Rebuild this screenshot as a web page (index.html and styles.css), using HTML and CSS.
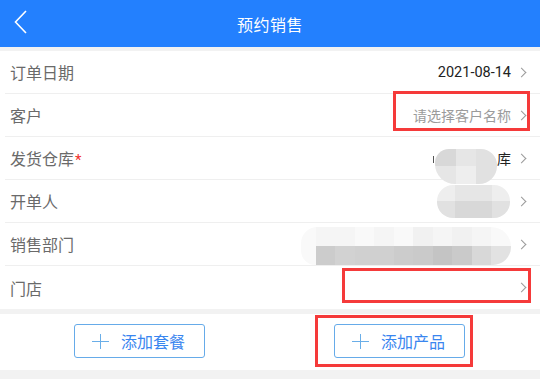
FILE: index.html
```html
<!DOCTYPE html>
<html lang="zh-CN">
<head>
  <meta charset="UTF-8" />
  <title>预约销售</title>
  <meta name="viewport" content="width=device-width, initial-scale=1.0" />
  <link rel="stylesheet" href="styles.css">
</head>
<body>

  <header class="topbar">
    <a class="back" href="#">
      <svg width="14" height="24" viewBox="0 0 14 24"><polyline points="12,1 1.5,12 12,23" fill="none" stroke="#fff" stroke-width="1.6"/></svg>
    </a>
    <h1>预约销售</h1>
  </header>

  <main class="form">
    <div class="row">
      <span class="label">订单日期</span>
      <span class="value date">2021-08-14</span>
      <i class="arrow"></i>
    </div>
    <div class="row">
      <span class="label">客户</span>
      <span class="value placeholder">请选择客户名称</span>
      <i class="arrow"></i>
    </div>
    <div class="row">
      <span class="label">发货仓库<em>*</em></span>
      <span class="tick"></span>
      <div class="blob blob-store">
        <div class="cells"><b class="g4"></b><b class="g2"></b><b class="g3"></b></div>
        <div class="cells"><b class="g2"></b><b class="g1"></b><b class="g3"></b></div>
      </div>
      <span class="value">库</span>
      <i class="arrow"></i>
    </div>
    <div class="row">
      <span class="label">开单人</span>
      <div class="blob blob-user">
        <div class="cells"><b class="g1"></b><b class="g2"></b><b class="g2"></b><b class="g1"></b></div>
        <div class="cells"><b class="g3"></b><b class="g4"></b><b class="g4"></b><b class="g3"></b></div>
      </div>
      <i class="arrow"></i>
    </div>
    <div class="row">
      <span class="label">销售部门</span>
      <div class="blob blob-dept">
        <div class="cells"><b class="w0"></b><b class="w1"></b><b class="w1"></b><b class="w0"></b><b class="w1"></b><b class="w0"></b><b class="w2"></b><b class="w1"></b><b class="w2"></b><b class="w1"></b><b class="w0"></b></div>
        <div class="cells"><b class="w0"></b><b class="d2"></b><b class="d3"></b><b class="d4"></b><b class="d4"></b><b class="d2"></b><b class="d1"></b><b class="d5"></b><b class="d1"></b><b class="d6"></b><b class="d7"></b></div>
      </div>
      <i class="arrow"></i>
    </div>
    <div class="row">
      <span class="label">门店</span>
      <span class="value"></span>
      <i class="arrow"></i>
    </div>
  </main>

  <section class="actions">
    <button class="add-btn"><span class="plus"></span>添加套餐</button>
    <button class="add-btn"><span class="plus"></span>添加产品</button>
  </section>

  <div class="mark mark-customer"></div>
  <div class="mark mark-shop"></div>
  <div class="mark mark-product"></div>

</body>
</html>
```

FILE: styles.css
```css
body {
  margin: 0;
  padding: 0;
  width: 540px;
  height: 379px;
  overflow: hidden;
  position: relative;
  background: #f2f2f2;
  font-family: Roboto, "Noto Sans CJK SC", sans-serif;
}

.topbar {
  height: 47px;
  background-color: #2380fe;
  color: white;
  display: flex;
  align-items: center;
  justify-content: center;
  position: relative;
}

.topbar h1 {
  margin: 0;
  font-size: 16px;
  font-weight: normal;
  letter-spacing: 0.5px;
}

.back {
  position: absolute;
  left: 14px;
  top: 10px;
  display: block;
  line-height: 0;
}

.form {
  margin-top: 4px;
  background: white;
  padding-left: 5px;
}

.row {
  height: 42px;
  display: flex;
  align-items: center;
  border-bottom: 1px solid #efefef;
  padding: 0 14px 0 5px;
}

.row:last-child { border-bottom: none; height: 43px; }

.label {
  flex: 1;
  font-size: 16px;
  color: #6a6a6a;
}

.label em {
  color: #f0302c;
  font-style: normal;
  font-size: 15px;
  margin-left: 1px;
}

.value {
  font-size: 14px;
  color: #222;
}

.date { font-size: 14.5px; }

.placeholder { color: #9b9b9b; }

.arrow {
  width: 6px;
  height: 6px;
  border-top: 1px solid #9a9a9a;
  border-right: 1px solid #9a9a9a;
  transform: rotate(45deg);
  margin-left: 7px;
  margin-right: 1px;
}

.tick {
  width: 1px;
  height: 7px;
  background: #555;
  margin-right: 1px;
  margin-top: 3px;
}

.blob {
  display: flex;
  flex-direction: column;
  overflow: hidden;
  filter: blur(0.6px);
}

.cells { display: flex; flex: 1; }
.cells b { flex: 1; }

.blob-store {
  width: 62px;
  height: 35px;
  margin-top: 8px;
  margin-bottom: -8px;
  border-radius: 14px 16px 18px 20px;
}

.blob-user {
  width: 73px;
  height: 33px;
  margin-right: 1px;
  border-radius: 16px;
}

.blob-dept {
  width: 210px;
  height: 38px;
  margin-top: 4px;
  border-radius: 18px 22px 20px 16px;
}

.blob-dept .cells b:first-child { flex: 0.75; }

.g1 { background: #eeeeee; }
.g2 { background: #e6e6e6; }
.g3 { background: #e1e1e1; }
.g4 { background: #d8d8d8; }

.w0 { background: #f9f9f9; }
.w1 { background: #f5f5f5; }
.w2 { background: #f1f1f1; }
.d1 { background: #cacaca; }
.d2 { background: #cccccc; }
.d3 { background: #d2d2d2; }
.d4 { background: #d0d0d0; }
.d5 { background: #c4c4c4; }
.d6 { background: #d8d8d8; }
.d7 { background: #e2e2e2; }

.actions {
  margin-top: 5px;
  height: 56px;
  background: white;
  display: flex;
  align-items: center;
  justify-content: space-between;
  padding: 0 75px 0 74px;
}

.add-btn {
  width: 131px;
  height: 34px;
  border: 1px solid #66abe9;
  border-radius: 3px;
  background: white;
  color: #3a86ef;
  font-family: "Noto Sans CJK SC", sans-serif;
  font-size: 16px;
  display: flex;
  align-items: center;
  justify-content: center;
  padding: 0 2px 0 0;
  margin-top: -2px;
}

.plus {
  width: 17px;
  height: 15px;
  margin-right: 12px;
  background:
    linear-gradient(#6aaee8, #6aaee8) center / 17px 1px no-repeat,
    linear-gradient(#6aaee8, #6aaee8) center / 1px 15px no-repeat;
}

.mark {
  position: absolute;
  border: 3px solid #f53a3a;
  box-sizing: border-box;
}

.mark-customer { left: 393px; top: 91px; width: 137px; height: 40px; }
.mark-shop { left: 342px; top: 268px; width: 189px; height: 35px; }
.mark-product { left: 315px; top: 315px; width: 158px; height: 52px; }
```
